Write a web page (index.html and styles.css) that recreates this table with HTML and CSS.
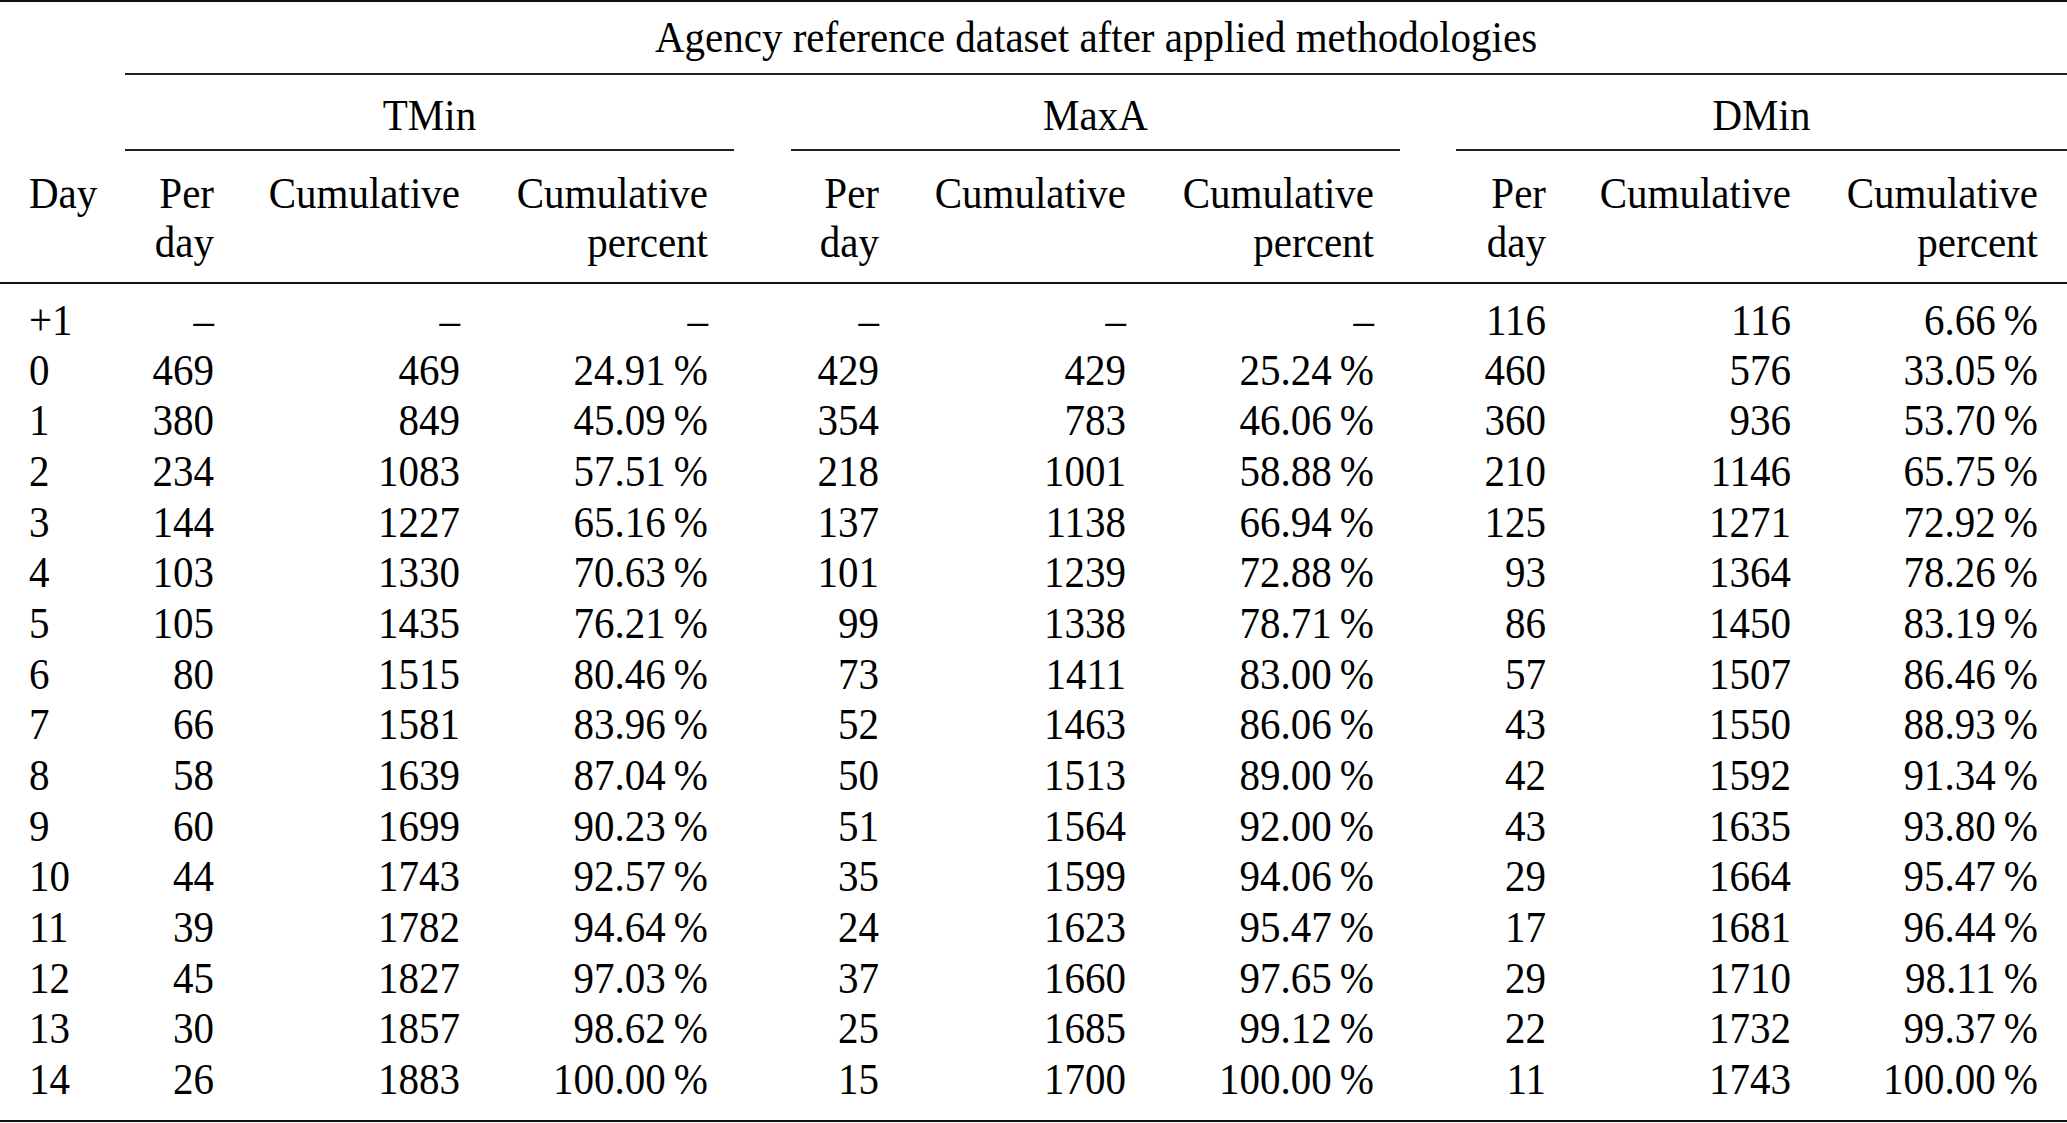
FILE: index.html
```html
<!DOCTYPE html>
<html>
<head>
<meta charset="utf-8">
<link rel="stylesheet" href="styles.css">
</head>
<body>
<table class="tbl">
  <colgroup>
    <col class="w-day">
    <col class="w-per"><col class="w-cum"><col class="w-pct">
    <col class="w-sp1">
    <col class="w-per2"><col class="w-cum2"><col class="w-pct">
    <col class="w-sp2">
    <col class="w-per3"><col class="w-cum3"><col class="w-pct3">
  </colgroup>
  <thead>
    <tr class="r-title">
      <th class="empty"></th>
      <th class="title" colspan="11"><span class="t">Agency reference dataset after applied methodologies</span></th>
    </tr>
    <tr class="r-group">
      <th class="empty"></th>
      <th class="grp" colspan="3"><span class="t">TMin</span></th>
      <th class="empty"></th>
      <th class="grp" colspan="3"><span class="t">MaxA</span></th>
      <th class="empty"></th>
      <th class="grp" colspan="3"><span class="t">DMin</span></th>
    </tr>
    <tr class="r-head">
      <th class="day"><span class="t">Day</span></th>
      <th><span class="t">Per</span><br><span class="t">day</span></th><th><span class="t">Cumulative</span></th><th><span class="t">Cumulative</span><br><span class="t">percent</span></th>
      <th class="empty"></th>
      <th><span class="t">Per</span><br><span class="t">day</span></th><th><span class="t">Cumulative</span></th><th><span class="t">Cumulative</span><br><span class="t">percent</span></th>
      <th class="empty"></th>
      <th><span class="t">Per</span><br><span class="t">day</span></th><th><span class="t">Cumulative</span></th><th class="last"><span class="t">Cumulative</span><br><span class="t">percent</span></th>
    </tr>
  </thead>
  <tbody>
    <tr class="first"><td class="day">+1</td><td>–</td><td>–</td><td>–</td><td></td><td>–</td><td>–</td><td>–</td><td></td><td>116</td><td>116</td><td class="last">6.66&#8201;%</td></tr>
    <tr><td class="day">0</td><td>469</td><td>469</td><td>24.91&#8201;%</td><td></td><td>429</td><td>429</td><td>25.24&#8201;%</td><td></td><td>460</td><td>576</td><td class="last">33.05&#8201;%</td></tr>
    <tr><td class="day">1</td><td>380</td><td>849</td><td>45.09&#8201;%</td><td></td><td>354</td><td>783</td><td>46.06&#8201;%</td><td></td><td>360</td><td>936</td><td class="last">53.70&#8201;%</td></tr>
    <tr><td class="day">2</td><td>234</td><td>1083</td><td>57.51&#8201;%</td><td></td><td>218</td><td>1001</td><td>58.88&#8201;%</td><td></td><td>210</td><td>1146</td><td class="last">65.75&#8201;%</td></tr>
    <tr><td class="day">3</td><td>144</td><td>1227</td><td>65.16&#8201;%</td><td></td><td>137</td><td>1138</td><td>66.94&#8201;%</td><td></td><td>125</td><td>1271</td><td class="last">72.92&#8201;%</td></tr>
    <tr><td class="day">4</td><td>103</td><td>1330</td><td>70.63&#8201;%</td><td></td><td>101</td><td>1239</td><td>72.88&#8201;%</td><td></td><td>93</td><td>1364</td><td class="last">78.26&#8201;%</td></tr>
    <tr><td class="day">5</td><td>105</td><td>1435</td><td>76.21&#8201;%</td><td></td><td>99</td><td>1338</td><td>78.71&#8201;%</td><td></td><td>86</td><td>1450</td><td class="last">83.19&#8201;%</td></tr>
    <tr><td class="day">6</td><td>80</td><td>1515</td><td>80.46&#8201;%</td><td></td><td>73</td><td>1411</td><td>83.00&#8201;%</td><td></td><td>57</td><td>1507</td><td class="last">86.46&#8201;%</td></tr>
    <tr><td class="day">7</td><td>66</td><td>1581</td><td>83.96&#8201;%</td><td></td><td>52</td><td>1463</td><td>86.06&#8201;%</td><td></td><td>43</td><td>1550</td><td class="last">88.93&#8201;%</td></tr>
    <tr><td class="day">8</td><td>58</td><td>1639</td><td>87.04&#8201;%</td><td></td><td>50</td><td>1513</td><td>89.00&#8201;%</td><td></td><td>42</td><td>1592</td><td class="last">91.34&#8201;%</td></tr>
    <tr><td class="day">9</td><td>60</td><td>1699</td><td>90.23&#8201;%</td><td></td><td>51</td><td>1564</td><td>92.00&#8201;%</td><td></td><td>43</td><td>1635</td><td class="last">93.80&#8201;%</td></tr>
    <tr><td class="day">10</td><td>44</td><td>1743</td><td>92.57&#8201;%</td><td></td><td>35</td><td>1599</td><td>94.06&#8201;%</td><td></td><td>29</td><td>1664</td><td class="last">95.47&#8201;%</td></tr>
    <tr><td class="day">11</td><td>39</td><td>1782</td><td>94.64&#8201;%</td><td></td><td>24</td><td>1623</td><td>95.47&#8201;%</td><td></td><td>17</td><td>1681</td><td class="last">96.44&#8201;%</td></tr>
    <tr><td class="day">12</td><td>45</td><td>1827</td><td>97.03&#8201;%</td><td></td><td>37</td><td>1660</td><td>97.65&#8201;%</td><td></td><td>29</td><td>1710</td><td class="last">98.11&#8201;%</td></tr>
    <tr><td class="day">13</td><td>30</td><td>1857</td><td>98.62&#8201;%</td><td></td><td>25</td><td>1685</td><td>99.12&#8201;%</td><td></td><td>22</td><td>1732</td><td class="last">99.37&#8201;%</td></tr>
    <tr class="final"><td class="day">14</td><td>26</td><td>1883</td><td>100.00&#8201;%</td><td></td><td>15</td><td>1700</td><td>100.00&#8201;%</td><td></td><td>11</td><td>1743</td><td class="last">100.00&#8201;%</td></tr>
  </tbody>
</table>
</body>
</html>
```

FILE: styles.css
```css
html, body {
  margin: 0;
  padding: 0;
  background: #fff;
}

.tbl {
  width: 2067px;
  table-layout: fixed;
  border-collapse: separate;
  border-spacing: 0;
  font-family: "Liberation Serif", "Times New Roman", serif;
  font-size: 41px;
  color: #000;
  border-top: 2px solid #111;
  border-bottom: 2px solid #111;
}

.w-day { width: 125px; }
.w-per { width: 115px; }
.w-cum { width: 246px; }
.w-pct { width: 248px; }
.w-sp1 { width: 57px; }
.w-per2 { width: 114px; }
.w-cum2 { width: 247px; }
.w-sp2 { width: 56px; }
.w-per3 { width: 116px; }
.w-cum3 { width: 245px; }
.w-pct3 { width: 250px; }

th, td {
  padding: 0 26px 0 0;
  font-weight: normal;
  text-align: right;
  white-space: nowrap;
}

.t {
  display: inline-block;
  transform: scaleY(1.1);
}

th.empty, td:empty {
  padding: 0;
}

.r-title th {
  line-height: 49px;
  padding-top: 11px;
  padding-bottom: 11px;
}

.r-title th.title {
  text-align: center;
  padding-right: 0;
  border-bottom: 2px solid #222;
}

.r-group th {
  line-height: 49px;
  padding-top: 16px;
  padding-bottom: 9px;
}

.r-group th.grp {
  text-align: center;
  padding-right: 0;
  border-bottom: 2px solid #222;
}

.r-head th {
  line-height: 49px;
  vertical-align: top;
  padding-top: 18px;
  padding-bottom: 15px;
  border-bottom: 2px solid #111;
}

.r-head th.day,
td.day {
  text-align: left;
  padding-left: 29px;
  padding-right: 0;
}

th.last, td.last {
  padding-right: 29px;
}

tbody td {
  line-height: 50.67px;
  transform: scaleY(1.1);
}

tbody tr.first td {
  padding-top: 10px;
}

tbody tr.final td {
  padding-bottom: 15px;
}
```
